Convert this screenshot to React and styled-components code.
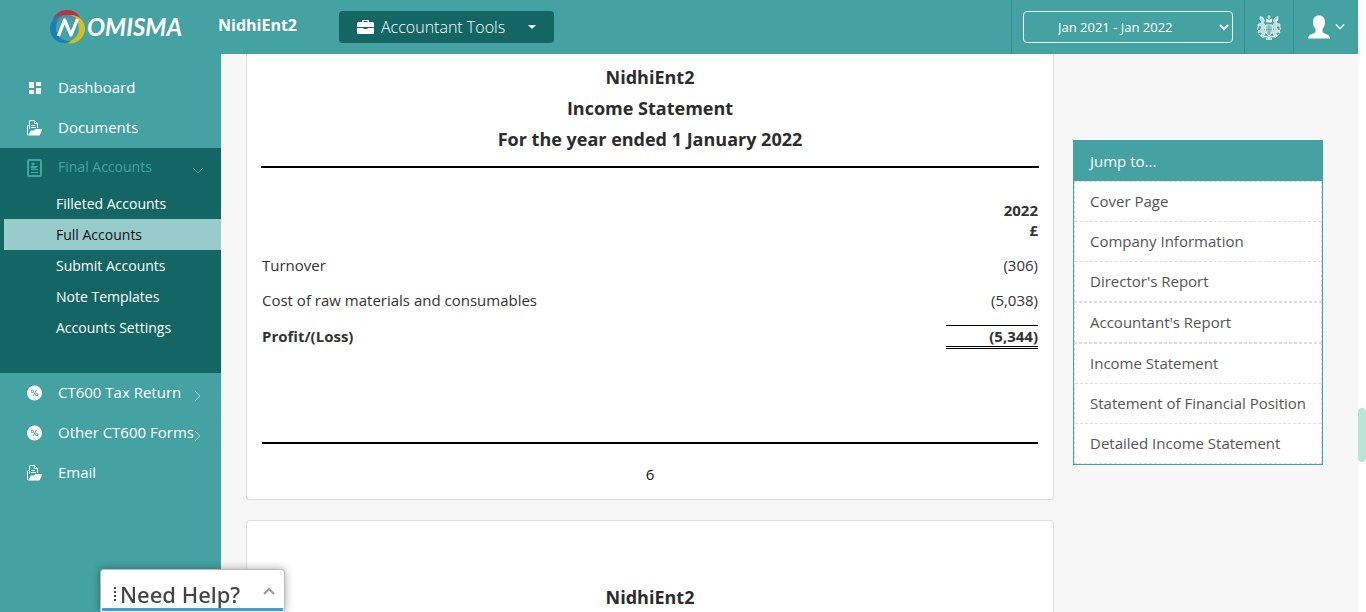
import React from "react";
import styled, { createGlobalStyle } from "styled-components";

const teal = "#44a2a2";
const deepTeal = "#136664";

const GlobalStyle = createGlobalStyle`
  * { box-sizing: border-box; }
  body {
    margin: 0;
    background: #fff;
    color: #333;
    font-family: "Open Sans", "Noto Sans", sans-serif;
    font-size: 15px;
    line-height: 20px;
  }
  a { color: inherit; text-decoration: none; }
  button, select { font-family: inherit; }
`;

const Frame = styled.div`
  display: flex;
  height: 100vh;
  overflow: hidden;
`;

const Shell = styled.div`
  flex: 1;
  min-width: 0;
  display: flex;
  flex-direction: column;
`;

const ScrollTrack = styled.div`
  width: 8px;
  display: flex;
  flex-direction: column;
`;

const TrackSpace = styled.div`
  flex: ${(p) => p.$share};
`;

const ScrollThumb = styled.div`
  height: 54px;
  border-radius: 4px;
  background: #b9e4d6;
`;

const Header = styled.header`
  flex: none;
  height: 54px;
  display: flex;
  background: ${teal};
  color: #fff;
`;

const LogoLink = styled.a`
  width: 218px;
  padding-left: 48px;
  svg { display: block; }
`;

const CompanyName = styled.strong`
  width: 121px;
  padding-top: 15px;
  font-size: 16px;
  font-weight: 700;
`;

const ToolsButton = styled.button`
  display: flex;
  align-items: center;
  gap: 7px;
  width: 215px;
  height: 32px;
  margin-top: 11px;
  padding: 0 18px;
  border: 0;
  border-radius: 4px;
  background: ${deepTeal};
  color: #fff;
  font-size: 16px;
  font-weight: 300;
  span { flex: 1; text-align: left; }
`;

const HeaderActions = styled.div`
  display: flex;
  margin-left: auto;
`;

const HeaderCell = styled.div`
  display: flex;
  justify-content: center;
  padding-top: 11px;
  width: ${(p) => p.$width}px;
  border-left: 1px solid #33908f;
`;

const PeriodSelect = styled.select`
  width: 210px;
  height: 32px;
  padding: 0 4px 0 30px;
  border: 1px solid #e6f2f2;
  border-radius: 4px;
  background: transparent;
  color: #fff;
  font-size: 13px;
`;

const IconButton = styled.button`
  display: flex;
  align-items: center;
  gap: 4px;
  height: 32px;
  padding: 0;
  border: 0;
  background: none;
  color: #fff;
`;

const Body = styled.div`
  flex: 1;
  min-height: 0;
  display: flex;
`;

const Sidebar = styled.nav`
  flex: none;
  width: 221px;
  padding-top: 14px;
  background: ${teal};
  color: #fff;
`;

const NavItem = styled.a`
  display: grid;
  grid-template-columns: 16px minmax(0, 1fr) 12px;
  column-gap: 15px;
  align-items: center;
  height: 40px;
  padding: 0 17px 0 27px;
  white-space: nowrap;
  color: ${(p) => (p.$open ? teal : "#fff")};
  font-size: ${(p) => (p.$open ? 14 : 15)}px;
`;

const NavLabel = styled.span`
  padding-bottom: 2px;
`;

const ChevronSlot = styled.span`
  display: flex;
  padding-top: 6px;
  opacity: ${(p) => (p.$open ? 1 : 0.5)};
`;

const NavGroup = styled.div`
  padding-bottom: 30px;
  background: ${deepTeal};
`;

const SubLink = styled.a`
  display: block;
  margin-left: 4px;
  padding-left: 52px;
  font-size: 14px;
  line-height: 31px;
  background: ${(p) => (p.$active ? "#98cccc" : "transparent")};
  color: ${(p) => (p.$active ? "#111" : "#fff")};
`;

const Content = styled.main`
  flex: 1;
  min-width: 0;
  display: flex;
  align-items: flex-start;
  gap: 19px;
  padding: 0 35px 0 25px;
  background: #f7f7f7;
  overflow: hidden;
`;

const Pages = styled.div`
  flex: 1;
  min-width: 0;
  display: flex;
  flex-direction: column;
  gap: 20px;
`;

const Sheet = styled.article`
  padding: ${(p) => (p.$continued ? "8px" : "61px")} 14px 15px;
  border: 1px solid #ddd;
  border-top-width: ${(p) => (p.$continued ? 0 : "1px")};
  border-radius: ${(p) => (p.$continued ? "0 0 4px 4px" : "4px")};
  background: #fff;
`;

const SheetTitle = styled.h2`
  margin: 0;
  text-align: center;
  font-size: 18px;
  font-weight: 700;
  line-height: 31px;
  color: #2c2c2c;
`;

const Rule = styled.hr`
  height: 2px;
  margin: ${(p) => p.$top}px ${(p) => p.$inset || 0}px 0;
  border: 0;
  background: #000;
`;

const Statement = styled.table`
  width: 100%;
  margin-top: 32px;
  border-collapse: collapse;
  th, td { padding: 0 1px; text-align: left; }
  thead th { height: 47px; vertical-align: top; text-align: right; font-weight: 700; }
  tbody th { height: 35px; font-weight: 400; }
  tbody td { text-align: right; }
  tfoot th, tfoot td { height: 39px; font-weight: 700; }
  tfoot th { padding-bottom: 2px; }
  tfoot td { text-align: right; }
`;

const Total = styled.span`
  display: inline-block;
  width: 92px;
  border-top: 1px solid #000;
  border-bottom: 3px double #000;
`;

const PageNumber = styled.p`
  margin: 20px 0 0;
  text-align: center;
  color: #111;
`;

const JumpPanel = styled.aside`
  flex: none;
  width: 250px;
  margin-top: 86px;
  border: 1px solid ${teal};
  background: #fff;
`;

const JumpTitle = styled.h3`
  margin: 0;
  padding: 0 16px;
  background: ${teal};
  color: #fff;
  font-size: 15px;
  font-weight: 500;
  line-height: 40px;
`;

const JumpGroup = styled.div`
  border: 1px dashed #ddd;
`;

const JumpLink = styled.a`
  display: block;
  padding: 0 15px;
  color: #555;
  line-height: 39px;
  white-space: nowrap;
  & + & { border-top: 1px dashed #ddd; }
`;

const HelpTab = styled.button`
  position: fixed;
  left: 100px;
  bottom: 0;
  width: 185px;
  height: 43px;
  padding: 0 1px 1px;
  border: 1px solid #bbb;
  border-bottom: 0;
  border-radius: 4px 4px 0 0;
  background: #fff;
  box-shadow: 0 0 8px rgba(0, 0, 0, 0.35);
  color: #444;
  font-family: "Noto Sans", "Open Sans", sans-serif;
  font-size: 22px;
  font-weight: 500;
`;

const HelpContent = styled.span`
  display: flex;
  align-items: center;
  gap: 3px;
  height: 41px;
  padding: 10px 8px 0 11px;
  border-bottom: 3px solid #3a9fdc;
`;

const HelpLabel = styled.span`
  flex: 1;
  text-align: left;
`;

const HelpArrow = styled.span`
  display: flex;
  padding-bottom: 4px;
  color: #999;
`;

function Logo() {
  return (
    <svg width="140" height="54" viewBox="0 0 140 54" role="img" aria-label="Nomisma">
      <path d="M5 19.500C8 13 13 10 19 10S30 13 32.500 19C29 16 25 15 22 15C15 14.500 9 16 5 19.500z" fill="#b93339" />
      <path d="M22 15C31 15 37 21 37 28.500S31 43.500 22 43.500C20 43.500 18 43 16.500 42.300C25 42 31 36 31 28.500C31 22 27.500 17.500 22 15z" fill="#d8bd22" />
      <path d="M15.500 15C7 15.500 2 21.500 2 28.500C2 37 8.500 43 16.500 43C19 43 21 42.500 23 41.500C14 41 8 35.500 8 28.500C8 22.500 11 17.500 15.500 15z" fill="#1c7fb4" />
      <path d="M8 22Q11 16.500 18 16Q25 15.500 29 20" fill="none" stroke="#4d86ad" strokeWidth="2" opacity=".7" />
      <path d="M10.500 36L16.500 20L23 35L29.500 19" fill="none" stroke="#fff" strokeWidth="3.200" strokeLinejoin="round" />
      <text x="39" y="36" fill="#fff" fontFamily="Lato, sans-serif" fontStyle="italic" fontWeight="700" fontSize="24">OMISMA</text>
    </svg>
  );
}

function DashboardIcon() {
  return (
    <svg width="16" height="16" viewBox="0 0 16 16" fill="currentColor">
      <path d="M2 2h5v6H2zM9 2h5v4H9zM2 10h5v4H2zM9 8h5v6H9z" />
    </svg>
  );
}

function FolderIcon() {
  return (
    <svg width="16" height="16" viewBox="0 0 16 16">
      <g fill="none" stroke="#fff">
        <path d="M2.500 9V.5h5l3 3V8M7.500 .5v3h3M.5 15V5.500h2M4 5.500h4M4 7.500h5" opacity=".85" />
      </g>
      <path d="M1 15.500L4 10.500h3l1.500-1.500H15.500L12.500 15.500z" fill="#fff" />
    </svg>
  );
}

function ReportIcon() {
  return (
    <svg width="16" height="18" viewBox="0 0 16 18">
      <rect x="1" y="1" width="13" height="16" rx="1" fill="none" stroke={teal} strokeWidth="2" />
      <circle cx="6" cy="5" r="1.500" fill={teal} />
      <path d="M4 9V7.500h5V9zM4 10.500h7M4 13.500h7M9 7.500h2" stroke={teal} fill={teal} />
    </svg>
  );
}

function PercentIcon() {
  return (
    <svg width="16" height="16" viewBox="0 0 16 16">
      <circle cx="7.500" cy="8" r="7.500" fill="#fff" />
      <g fill="none" stroke={teal}>
        <circle cx="5.500" cy="6.500" r="1.200" />
        <circle cx="9.700" cy="9.500" r="1.200" />
        <path d="M9.500 5L6 11" />
      </g>
    </svg>
  );
}

function BriefcaseIcon() {
  return (
    <svg width="17" height="16" viewBox="0 0 17 16" fill="currentColor">
      <path d="M5 3V2Q5 1 6 1h5q1 0 1 1v1h3.500Q17 3 17 4.500V8H0V4.500Q0 3 1.500 3zM6.500 3h4V2h-4zM0 9h6.500v1h4V9H17v5q0 1-1 1H1q-1 0-1-1z" />
    </svg>
  );
}

function Chevron({ size = 12, direction = "right", weight = 1 }) {
  const paths = { right: "M3 1l5 5-5 5", down: "M1 3l5 5 5-5", up: "M1 8l5-5 5 5" };
  return (
    <svg width={size} height={size} viewBox="0 0 12 12" fill="none" stroke="currentColor" strokeWidth={weight}>
      <path d={paths[direction]} />
    </svg>
  );
}

function CrestIcon() {
  return (
    <svg width="24" height="26" viewBox="0 0 24 26" fill="none" stroke="#fff">
      <path d="M12 1v4M10.500 3h3M9.500 8V5l2.500 1.500L14.500 5v3z" fill="#fff" opacity=".85" />
      <path d="M8.500 11h7v5q0 4-3.500 6-3.500-2-3.500-6z" fill="#fff" fillOpacity=".5" opacity=".9" />
      <path d="M12 11v10M9 15.500h6" stroke={teal} opacity=".6" />
      <g fill="#fff" fillOpacity=".75" strokeWidth=".7" opacity=".9">
        <path d="M3 2.500l3 1 1.500 3-1 2 1.500 3-1 4 1.500 3-1.500 3-3 1 .5-2 1-1.500-2.500-1-2 1 .5-2 2-1.500 1-2-1-2-2.500 1L1 10l3-.5.5-2L3 6z" />
        <path d="M21 2.500l-3 1-1.500 3 1 2-1.500 3 1 4-1.500 3 1.500 3 3 1-.5-2-1-1.500 2.500-1 2 1-.5-2-2-1.500-1-2 1-2 2.500 1L23 10l-3-.5-.5-2L21 6z" />
      </g>
      <path d="M1 13q-1 3 1 4M23 13q1 3-1 4M1.500 20l3 2M22.500 20l-3 2" opacity=".8" />
      <path d="M5 23.500q3-2 7 0 4-2 7 0M9 25h6" strokeWidth="1.500" opacity=".85" />
    </svg>
  );
}

function UserIcon() {
  return (
    <svg width="24" height="24" viewBox="0 0 24 24" fill="currentColor">
      <path d="M12 .5c4 0 6 2.500 6 6.500 0 3-1 5-2.500 7v2.500c0 1 1 1.500 3 2.200C21.500 20 23 21 23 23.500H1C1 21 2.500 20 5.500 18.700c2-.7 3-1.200 3-2.200V14C7 12 6 10 6 7 6 3 8 .5 12 .5z" />
    </svg>
  );
}

const subLinks = ["Filleted Accounts", "Full Accounts", "Submit Accounts", "Note Templates", "Accounts Settings"];

const jumpGroups = [
  ["Cover Page", "Company Information", "Director's Report"],
  ["Accountant's Report"],
  ["Income Statement", "Statement of Financial Position", "Detailed Income Statement"],
];

function NavEntry({ icon, label, chevron, open }) {
  return (
    <NavItem href="#" $open={open}>
      {icon}
      <NavLabel>{label}</NavLabel>
      {chevron && <ChevronSlot $open={open}><Chevron direction={chevron} /></ChevronSlot>}
    </NavItem>
  );
}

export default function App() {
  return (
    <Frame>
      <GlobalStyle />
      <Shell>
        <Header>
          <LogoLink href="#"><Logo /></LogoLink>
          <CompanyName>NidhiEnt2</CompanyName>
          <ToolsButton type="button">
            <BriefcaseIcon />
            <span>Accountant Tools</span>
            <svg width="8" height="4" viewBox="0 0 8 4" fill="currentColor"><path d="M0 0h8L4 4z" /></svg>
          </ToolsButton>
          <HeaderActions>
            <HeaderCell $width={233}>
              <PeriodSelect aria-label="Accounting period">
                <option>Jan 2021 - Jan 2022</option>
              </PeriodSelect>
            </HeaderCell>
            <HeaderCell $width={49}>
              <IconButton type="button" aria-label="Companies House"><CrestIcon /></IconButton>
            </HeaderCell>
            <HeaderCell $width={65}>
              <IconButton type="button" aria-label="Account">
                <UserIcon />
                <Chevron size={10} direction="down" weight={1.5} />
              </IconButton>
            </HeaderCell>
          </HeaderActions>
        </Header>
        <Body>
          <Sidebar>
            <NavEntry icon={<DashboardIcon />} label="Dashboard" />
            <NavEntry icon={<FolderIcon />} label="Documents" />
            <NavGroup>
              <NavEntry icon={<ReportIcon />} label="Final Accounts" chevron="down" open />
              {subLinks.map((label) => (
                <SubLink key={label} href="#" $active={label === "Full Accounts"}>{label}</SubLink>
              ))}
            </NavGroup>
            <NavEntry icon={<PercentIcon />} label="CT600 Tax Return" chevron="right" />
            <NavEntry icon={<PercentIcon />} label="Other CT600 Forms" chevron="right" />
            <NavEntry icon={<FolderIcon />} label="Email" />
          </Sidebar>
          <Content>
            <Pages>
              <Sheet $continued>
                <SheetTitle>NidhiEnt2</SheetTitle>
                <SheetTitle>Income Statement</SheetTitle>
                <SheetTitle>For the year ended 1 January 2022</SheetTitle>
                <Rule $top={11} />
                <Statement>
                  <thead>
                    <tr><td /><th scope="col">2022<br />£</th></tr>
                  </thead>
                  <tbody>
                    <tr><th scope="row">Turnover</th><td>(306)</td></tr>
                    <tr><th scope="row">Cost of raw materials and consumables</th><td>(5,038)</td></tr>
                  </tbody>
                  <tfoot>
                    <tr><th scope="row">Profit/(Loss)</th><td><Total>(5,344)</Total></td></tr>
                  </tfoot>
                </Statement>
                <Rule $top={86} $inset={1} />
                <PageNumber>6</PageNumber>
              </Sheet>
              <Sheet>
                <SheetTitle>NidhiEnt2</SheetTitle>
              </Sheet>
            </Pages>
            <JumpPanel>
              <JumpTitle>Jump to...</JumpTitle>
              {jumpGroups.map((group) => (
                <JumpGroup key={group[0]}>
                  {group.map((label) => <JumpLink key={label} href="#">{label}</JumpLink>)}
                </JumpGroup>
              ))}
            </JumpPanel>
          </Content>
        </Body>
      </Shell>
      <ScrollTrack>
        <TrackSpace $share={408} />
        <ScrollThumb />
        <TrackSpace $share={150} />
      </ScrollTrack>
      <HelpTab type="button">
        <HelpContent>
          <svg width="4" height="16" viewBox="0 0 4 16" fill="#444"><path d="M1 1h2v2H1zM1 5h2v2H1zM1 9h2v2H1zM1 13h2v2H1z" /></svg>
          <HelpLabel>Need Help?</HelpLabel>
          <HelpArrow><Chevron size={12} direction="up" weight={2} /></HelpArrow>
        </HelpContent>
      </HelpTab>
    </Frame>
  );
}
